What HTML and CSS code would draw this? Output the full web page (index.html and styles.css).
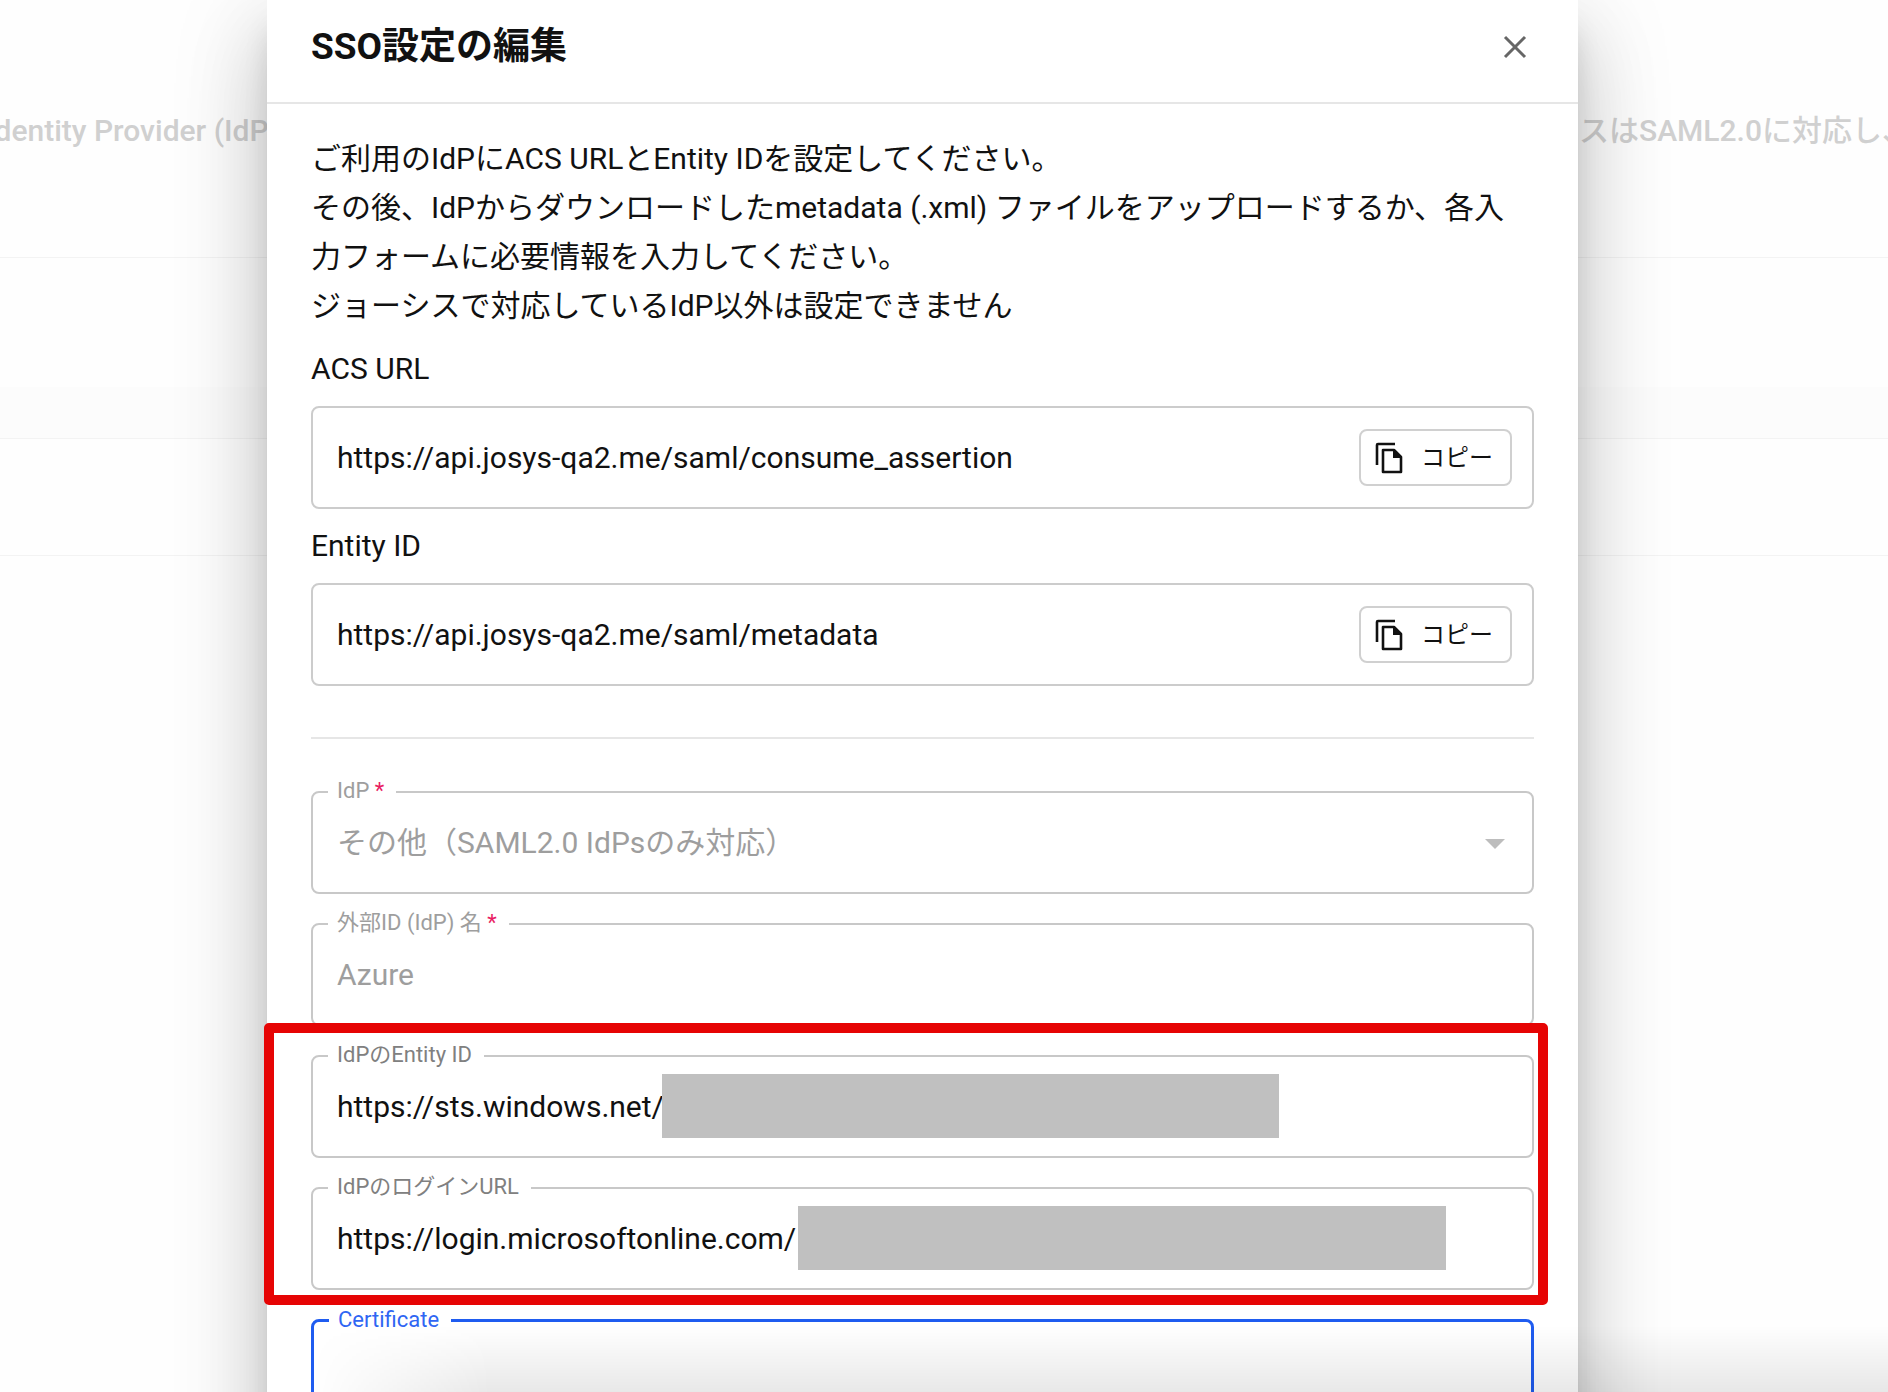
FILE: index.html
```html
<!DOCTYPE html>
<html lang="ja">
<head>
    <meta charset="UTF-8">
    <meta name="viewport" content="width=device-width, initial-scale=1.0">
    <title>SSO設定の編集</title>
    <link rel="stylesheet" href="styles.css">
</head>
<body>

    <div class="page">
        <div class="page-intro">
            <span class="intro-start">Identity Provider (IdP)</span>
            <span class="intro-end">ジョーシスはSAML2.0に対応し、</span>
        </div>
        <div class="page-row"></div>
        <div class="page-head"></div>
        <div class="page-row short"></div>
    </div>

    <div class="dialog" role="dialog" aria-labelledby="dialogTitle">
        <div class="dialog-header">
            <h2 id="dialogTitle">SSO設定の編集</h2>
            <button class="close-button" aria-label="閉じる">
                <svg width="24" height="24" viewBox="0 0 24 24"><path d="M2 2L22 22M22 2L2 22" stroke="#666" stroke-width="3" fill="none"/></svg>
            </button>
        </div>

        <div class="dialog-content">
            <p class="description">ご利用のIdPにACS URLとEntity IDを設定してください。<br>その後、IdPからダウンロードしたmetadata (.xml) ファイルをアップロードするか、各入力フォームに必要情報を入力してください。<br>ジョーシスで対応しているIdP以外は設定できません</p>

            <h3>ACS URL</h3>
            <div class="copy-box">
                <span>https://api.josys-qa2.me/saml/consume_assertion</span>
                <button class="copy-button">
                    <svg width="28" height="32" viewBox="0 0 28 32"><path d="M2 23V3Q2 2 3 2H20" stroke="#111" stroke-width="2.6" fill="none"/><path d="M8 8H19L26 15V30H8Z" stroke="#111" stroke-width="2.6" stroke-linejoin="round" fill="none"/><path d="M18 8L26 16H18Z" fill="#111"/></svg>
                    コピー
                </button>
            </div>

            <h3>Entity ID</h3>
            <div class="copy-box">
                <span>https://api.josys-qa2.me/saml/metadata</span>
                <button class="copy-button">
                    <svg width="28" height="32" viewBox="0 0 28 32"><path d="M2 23V3Q2 2 3 2H20" stroke="#111" stroke-width="2.6" fill="none"/><path d="M8 8H19L26 15V30H8Z" stroke="#111" stroke-width="2.6" stroke-linejoin="round" fill="none"/><path d="M18 8L26 16H18Z" fill="#111"/></svg>
                    コピー
                </button>
            </div>

            <hr>

            <form class="fields">
                <div class="field disabled">
                    <label for="idp">IdP <span class="required">*</span></label>
                    <select id="idp" disabled>
                        <option>その他（SAML2.0 IdPsのみ対応）</option>
                    </select>
                    <svg class="arrow" width="20" height="10" viewBox="0 0 20 10"><path d="M0 0H20L10 10Z" fill="#bdbdbd"/></svg>
                </div>
                <div class="field disabled">
                    <label for="idpName">外部ID (IdP) 名 <span class="required">*</span></label>
                    <input type="text" id="idpName" value="Azure" disabled>
                </div>
                <div class="highlight">
                    <div class="field">
                        <label for="entityId">IdPのEntity ID</label>
                        <input type="text" id="entityId" value="https://sts.windows.net/">
                        <span class="mask mask-entity"></span>
                    </div>
                    <div class="field">
                        <label for="loginUrl">IdPのログインURL</label>
                        <input type="text" id="loginUrl" value="https://login.microsoftonline.com/">
                        <span class="mask mask-login"></span>
                    </div>
                </div>
                <div class="field focused">
                    <label for="certificate">Certificate</label>
                    <textarea id="certificate"></textarea>
                </div>
            </form>
        </div>
    </div>

    <div class="bottom-shade"></div>

</body>
</html>
```

FILE: styles.css
```css
* {
    box-sizing: border-box;
}
body {
    margin: 0;
    height: 100vh;
    overflow: hidden;
    position: relative;
    background-color: #fefefe;
    color: #111;
    font-family: Roboto, "Noto Sans CJK JP", sans-serif;
    font-size: 30px;
}
button, input, select, textarea {
    font: inherit;
    color: inherit;
    background: none;
    border: none;
    outline: none;
    padding: 0;
}

/* page behind the dialog */
.page-intro {
    display: flex;
    justify-content: space-between;
    height: 258px;
    padding-top: 108px;
    border-bottom: 1px solid #f3f3f3;
    color: #d0d0d0;
    font-weight: 500;
    line-height: 46px;
    white-space: nowrap;
}
.intro-start {
    margin-left: -14px;
}
.intro-end {
    margin-right: -24px;
}
.page-row {
    height: 129px;
}
.page-row.short {
    height: 117px;
    border-bottom: 1px solid #f3f3f3;
}
.page-head {
    height: 52px;
    background-color: #fcfcfc;
    border-bottom: 1px solid #f3f3f3;
}

/* dialog */
.dialog {
    position: absolute;
    top: 0;
    left: 267px;
    right: 310px;
    background-color: #fff;
    box-shadow: 0 22px 30px -10px rgba(0, 0, 0, 0.2), 0 48px 76px 6px rgba(0, 0, 0, 0.14), 0 18px 92px 8px rgba(0, 0, 0, 0.1);
}
.dialog-header {
    display: flex;
    justify-content: space-between;
    align-items: center;
    height: 104px;
    padding: 0 51px 8px 44px;
    border-bottom: 2px solid #e6e6e6;
}
h2 {
    margin: 0 0 8px;
    font-size: 37px;
    font-weight: 700;
}
h3 {
    margin: 0;
    font-size: 30px;
    font-weight: 400;
    line-height: 74px;
}
.close-button {
    display: flex;
}
.dialog-content {
    padding: 30px 44px 44px;
}
.description {
    margin: 0 0 2px;
    line-height: 49px;
}
.copy-box {
    display: flex;
    justify-content: space-between;
    align-items: center;
    height: 103px;
    padding: 0 20px 0 24px;
    border: 2px solid #ccc;
    border-radius: 8px;
}
.copy-button {
    display: flex;
    align-items: center;
    gap: 18px;
    height: 57px;
    padding: 0 17px 0 14px;
    border: 2px solid #d0d0d0;
    border-radius: 8px;
    font-size: 24px;
    line-height: 32px;
}
hr {
    margin: 51px 0 52px;
    border: none;
    border-top: 2px solid #e6e6e6;
}
.fields {
    display: flex;
    flex-direction: column;
    gap: 29px;
}
.field {
    position: relative;
    height: 103px;
    border: 2px solid #c8c8c8;
    border-radius: 8px;
}
.field label {
    position: absolute;
    top: -17px;
    left: 15px;
    padding: 0 12px 0 9px;
    background-color: #fff;
    color: #808080;
    font-size: 22px;
    line-height: 30px;
}
.field input, .field select, .field textarea {
    display: block;
    width: 100%;
    height: 100%;
    padding: 0 24px;
    appearance: none;
    resize: none;
}
.field.disabled label {
    color: #9e9e9e;
}
.field.disabled select, .field.disabled input {
    color: #9e9e9e;
    opacity: 1;
}
.field .required {
    color: #e91e63;
}
.arrow {
    position: absolute;
    top: 46px;
    right: 27px;
}
.mask {
    position: absolute;
    background-color: #c0c0c0;
    height: 64px;
    top: 17px;
}
.mask-entity {
    left: 349px;
    width: 617px;
}
.mask-login {
    left: 485px;
    width: 648px;
}

/* red frame round the two fields that have to be filled in */
.highlight {
    position: relative;
    display: flex;
    flex-direction: column;
    gap: 29px;
}
.highlight::after {
    content: "";
    position: absolute;
    inset: -32px -14px -15px -47px;
    border: 10px solid #e60404;
    border-radius: 5px;
    pointer-events: none;
}
.field.focused {
    height: 260px;
    border: 3px solid #1f5cf0;
}
.field.focused label {
    color: #2f66f3;
}
.bottom-shade {
    position: absolute;
    left: 311px;
    right: 0;
    bottom: 0;
    height: 66px;
    background: linear-gradient(rgba(0, 0, 0, 0), rgba(0, 0, 0, 0.09));
    mask-image: linear-gradient(to right, transparent, #000 180px);
    pointer-events: none;
}
```
